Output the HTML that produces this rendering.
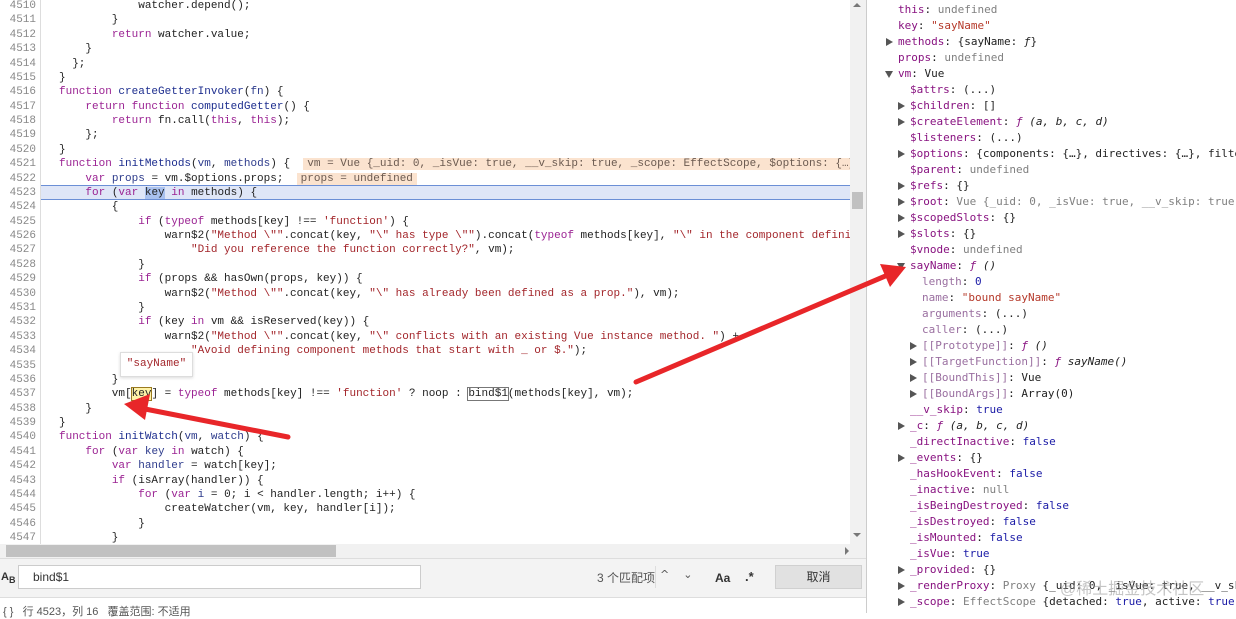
<!DOCTYPE html>
<html><head><meta charset="utf-8"><style>
*{margin:0;padding:0;box-sizing:border-box}
body{width:1236px;height:613px;overflow:hidden;background:#fff;position:relative;font-family:"Liberation Mono",monospace}
.code{position:absolute;left:0;top:0;width:866px;height:545px;overflow:hidden;font-size:11px}
.ln{position:absolute;left:0;width:36px;text-align:right;color:#888;height:14.38px;line-height:14.38px;white-space:pre}
.cl{position:absolute;left:59px;white-space:pre;height:14.38px;line-height:14.38px;color:#222}
.gut{position:absolute;left:40px;top:0;width:1px;height:545px;background:#ddd}
.k{color:#9b2393}.s{color:#a3262b}.d{color:#1c2d8e}.v{color:#2d3b8c}
.rp{position:absolute;left:866px;top:0;width:370px;height:613px;border-left:1px solid #ccc;font-family:"DejaVu Sans Mono",monospace;font-size:11px;overflow:hidden}
.r{position:absolute;white-space:pre;height:16px;line-height:16px;color:#222}
.p{color:#881280}.pl{color:#9a6fa0}.g{color:#808080}.b{color:#1a1aa6}.st{color:#b5392a}.i{font-style:italic}
.tri{position:absolute;width:0;height:0;border-top:4px solid transparent;border-bottom:4px solid transparent;border-left:7px solid #555}
.trd{position:absolute;width:0;height:0;border-left:4px solid transparent;border-right:4px solid transparent;border-top:7px solid #555}
.tip{background:#fbe3cf;color:#6b5a50;padding:0 4px}
</style></head><body>
<div class="code">
<div class="gut"></div>
<div style="position:absolute;left:41px;top:185px;width:809px;height:15px;background:#dfe6f7;border-top:1px solid #6b8fd6;border-bottom:1px solid #6b8fd6"></div>
<div id="lines"></div>
<div style="position:absolute;left:850px;top:0;width:16px;height:545px;background:#f1f1f1"></div>
<div style="position:absolute;left:852px;top:192px;width:11px;height:17px;background:#c1c1c1"></div>
<div style="position:absolute;left:853px;top:3px;width:0;height:0;border-left:4px solid transparent;border-right:4px solid transparent;border-bottom:4px solid #777"></div>
<div style="position:absolute;left:853px;top:533px;width:0;height:0;border-left:4px solid transparent;border-right:4px solid transparent;border-top:4px solid #777"></div>
</div>
<div style="position:absolute;left:0;top:544px;width:866px;height:14px;background:#f1f1f1"></div>
<div style="position:absolute;left:6px;top:545px;width:330px;height:12px;background:#c1c1c1"></div>
<div style="position:absolute;left:845px;top:547px;width:0;height:0;border-top:4px solid transparent;border-bottom:4px solid transparent;border-left:4px solid #777"></div>
<div style="position:absolute;left:0;top:558px;width:866px;height:40px;background:#f3f3f3;border-top:1px solid #ddd;border-bottom:1px solid #ddd"></div>
<div style="position:absolute;left:1px;top:571px;font-family:'Liberation Sans',sans-serif;font-size:11px;font-weight:bold;color:#333">A<sub style="font-size:9px">B</sub></div>
<div style="position:absolute;left:18px;top:565px;width:403px;height:24px;background:#fff;border:1px solid #ccc"></div>
<div style="position:absolute;left:33px;top:570px;font-family:'Liberation Sans',sans-serif;font-size:12px;color:#333">bind$1</div>
<div style="position:absolute;left:597px;top:569px;font-family:'Liberation Sans','Noto Sans CJK SC',sans-serif;font-size:12px;color:#555">3 个匹配项</div>
<div style="position:absolute;left:655px;top:566px;width:1px;height:22px;background:#ddd"></div>
<div style="position:absolute;left:660px;top:568px;font-size:11px;color:#555;font-family:'DejaVu Sans',sans-serif">^&nbsp;&nbsp;&nbsp;&nbsp;&#8964;</div>
<div style="position:absolute;left:715px;top:571px;font-family:'Liberation Sans',sans-serif;font-size:12px;font-weight:bold;color:#333">Aa</div>
<div style="position:absolute;left:745px;top:569px;font-family:'Liberation Sans',sans-serif;font-size:13px;font-weight:bold;color:#333">.*</div>
<div style="position:absolute;left:775px;top:565px;width:87px;height:24px;background:#e1e1e1;border:1px solid #d0d0d0;font-family:'Liberation Sans','Noto Sans CJK SC',sans-serif;font-size:12px;color:#333;text-align:center;line-height:22px">取消</div>
<div style="position:absolute;left:3px;top:603px;font-family:'Liberation Sans','Noto Sans CJK SC',sans-serif;font-size:11px;color:#555">{ }&nbsp;&nbsp;&nbsp;行 4523，列 16&nbsp;&nbsp;&nbsp;覆盖范围: 不适用</div>
<div class="rp" id="rp"></div>
<div style="position:absolute;left:1060px;top:575px;font-family:'Liberation Sans','Noto Sans CJK SC',sans-serif;font-size:16px;color:rgba(150,150,150,0.55)">@稀土掘金技术社区</div>
<div style="position:absolute;left:120px;top:352px;width:73px;height:25px;background:#fff;border:1px solid #ddd;box-shadow:0 1px 3px rgba(0,0,0,.15);font-size:11px;color:#a3262b;line-height:23px;text-align:center;font-family:'Liberation Mono',monospace">"sayName"</div>
<svg style="position:absolute;left:0;top:0" width="1236" height="613">
<line x1="288" y1="437" x2="140" y2="408" stroke="#e82629" stroke-width="5" stroke-linecap="round"/>
<polygon points="124,404 150,394 145,420" fill="#e82629"/>
<line x1="636" y1="382" x2="890" y2="274" stroke="#e82629" stroke-width="5" stroke-linecap="round"/>
<polygon points="906,267 880,264 890,287" fill="#e82629"/>
</svg>
<script>
var L=[
[4510,'            watcher.depend();'],
[4511,'        }'],
[4512,'        <span class="k">return</span> watcher.value;'],
[4513,'    }'],
[4514,'  };'],
[4515,'}'],
[4516,'<span class="k">function</span> <span class="d">createGetterInvoker</span>(<span class="v">fn</span>) {'],
[4517,'    <span class="k">return</span> <span class="k">function</span> <span class="d">computedGetter</span>() {'],
[4518,'        <span class="k">return</span> fn.call(<span class="k">this</span>, <span class="k">this</span>);'],
[4519,'    };'],
[4520,'}'],
[4521,'<span class="k">function</span> <span class="d">initMethods</span>(<span class="v">vm</span>, <span class="v">methods</span>) {  <span class="tip">vm = Vue {_uid: 0, _isVue: true, __v_skip: true, _scope: EffectScope, $options: {…}</span>'],
[4522,'    <span class="k">var</span> <span class="v">props</span> = vm.$options.props;  <span class="tip">props = undefined</span>'],
[4523,'    <span class="k">for</span> (<span class="k">var</span> <span style="background:#a9c1ee">key</span> <span class="k">in</span> methods) {'],
[4524,'        {'],
[4525,'            <span class="k">if</span> (<span class="k">typeof</span> methods[key] !== <span class="s">\'function\'</span>) {'],
[4526,'                warn$2(<span class="s">"Method \\""</span>.concat(key, <span class="s">"\\" has type \\""</span>).concat(<span class="k">typeof</span> methods[key], <span class="s">"\\" in the component defini</span>'],
[4527,'                    <span class="s">"Did you reference the function correctly?"</span>, vm);'],
[4528,'            }'],
[4529,'            <span class="k">if</span> (props &amp;&amp; hasOwn(props, key)) {'],
[4530,'                warn$2(<span class="s">"Method \\""</span>.concat(key, <span class="s">"\\" has already been defined as a prop."</span>), vm);'],
[4531,'            }'],
[4532,'            <span class="k">if</span> (key <span class="k">in</span> vm &amp;&amp; isReserved(key)) {'],
[4533,'                warn$2(<span class="s">"Method \\""</span>.concat(key, <span class="s">"\\" conflicts with an existing Vue instance method. "</span>) +'],
[4534,'                    <span class="s">"Avoid defining component methods that start with _ or $."</span>);'],
[4535,'            }'],
[4536,'        }'],
[4537,'        vm[<span style="background:#fff3a8;outline:1px solid #9a7a20">key</span>] = <span class="k">typeof</span> methods[key] !== <span class="s">\'function\'</span> ? noop : <span style="outline:1px solid #777">bind$1</span>(methods[key], vm);'],
[4538,'    }'],
[4539,'}'],
[4540,'<span class="k">function</span> <span class="d">initWatch</span>(<span class="v">vm</span>, <span class="v">watch</span>) {'],
[4541,'    <span class="k">for</span> (<span class="k">var</span> <span class="v">key</span> <span class="k">in</span> watch) {'],
[4542,'        <span class="k">var</span> <span class="v">handler</span> = watch[key];'],
[4543,'        <span class="k">if</span> (isArray(handler)) {'],
[4544,'            <span class="k">for</span> (<span class="k">var</span> <span class="v">i</span> = 0; i &lt; handler.length; i++) {'],
[4545,'                createWatcher(vm, key, handler[i]);'],
[4546,'            }'],
[4547,'        }']];
var h='';
L.forEach(function(a,i){var t=-1+i*14.38;h+='<div class="ln" style="top:'+t+'px">'+a[0]+'</div><div class="cl" style="top:'+t+'px">'+a[1]+'</div>';});
document.getElementById('lines').innerHTML=h;
var R=[
[31,0,'<span class="p">this</span>: <span class="g">undefined</span>'],
[31,0,'<span class="p">key</span>: <span class="st">"sayName"</span>'],
[31,1,'<span class="p">methods</span>: {sayName: <span class="i">ƒ</span>}'],
[31,0,'<span class="p">props</span>: <span class="g">undefined</span>'],
[31,2,'<span class="p">vm</span>: Vue'],
[43,0,'<span class="p">$attrs</span>: (...)'],
[43,1,'<span class="p">$children</span>: []'],
[43,1,'<span class="p">$createElement</span>: <span class="i"><span class="p">ƒ</span> (a, b, c, d)</span>'],
[43,0,'<span class="p">$listeners</span>: (...)'],
[43,1,'<span class="p">$options</span>: {components: {…}, directives: {…}, filte'],
[43,0,'<span class="p">$parent</span>: <span class="g">undefined</span>'],
[43,1,'<span class="p">$refs</span>: {}'],
[43,1,'<span class="p">$root</span>: <span class="g">Vue {_uid: 0, _isVue: true, __v_skip: true,</span>'],
[43,1,'<span class="p">$scopedSlots</span>: {}'],
[43,1,'<span class="p">$slots</span>: {}'],
[43,0,'<span class="p">$vnode</span>: <span class="g">undefined</span>'],
[43,2,'<span class="p">sayName</span>: <span class="i"><span class="p">ƒ</span> ()</span>'],
[55,0,'<span class="pl">length</span>: <span class="b">0</span>'],
[55,0,'<span class="pl">name</span>: <span class="st">"bound sayName"</span>'],
[55,0,'<span class="pl">arguments</span>: (...)'],
[55,0,'<span class="pl">caller</span>: (...)'],
[55,1,'<span class="pl">[[Prototype]]</span>: <span class="i"><span class="p">ƒ</span> ()</span>'],
[55,1,'<span class="pl">[[TargetFunction]]</span>: <span class="i"><span class="p">ƒ</span> sayName()</span>'],
[55,1,'<span class="pl">[[BoundThis]]</span>: Vue'],
[55,1,'<span class="pl">[[BoundArgs]]</span>: Array(0)'],
[43,0,'<span class="p">__v_skip</span>: <span class="b">true</span>'],
[43,1,'<span class="p">_c</span>: <span class="i"><span class="p">ƒ</span> (a, b, c, d)</span>'],
[43,0,'<span class="p">_directInactive</span>: <span class="b">false</span>'],
[43,1,'<span class="p">_events</span>: {}'],
[43,0,'<span class="p">_hasHookEvent</span>: <span class="b">false</span>'],
[43,0,'<span class="p">_inactive</span>: <span class="g">null</span>'],
[43,0,'<span class="p">_isBeingDestroyed</span>: <span class="b">false</span>'],
[43,0,'<span class="p">_isDestroyed</span>: <span class="b">false</span>'],
[43,0,'<span class="p">_isMounted</span>: <span class="b">false</span>'],
[43,0,'<span class="p">_isVue</span>: <span class="b">true</span>'],
[43,1,'<span class="p">_provided</span>: {}'],
[43,1,'<span class="p">_renderProxy</span>: <span class="g">Proxy</span> {_uid: 0, _isVue: true, __v_sk'],
[43,1,'<span class="p">_scope</span>: <span class="g">EffectScope</span> {detached: <span class="b">true</span>, active: <span class="b">true</span>,']];
var g='';
R.forEach(function(a,i){var l=a[0],t=2+i*16;
if(a[1]==1)g+='<span class="tri" style="left:'+(l-12)+'px;top:'+(t+4)+'px"></span>';
if(a[1]==2)g+='<span class="trd" style="left:'+(l-13)+'px;top:'+(t+5)+'px"></span>';
g+='<div class="r" style="left:'+l+'px;top:'+t+'px">'+a[2]+'</div>';});
document.getElementById('rp').innerHTML=g;
</script>
</body></html>
